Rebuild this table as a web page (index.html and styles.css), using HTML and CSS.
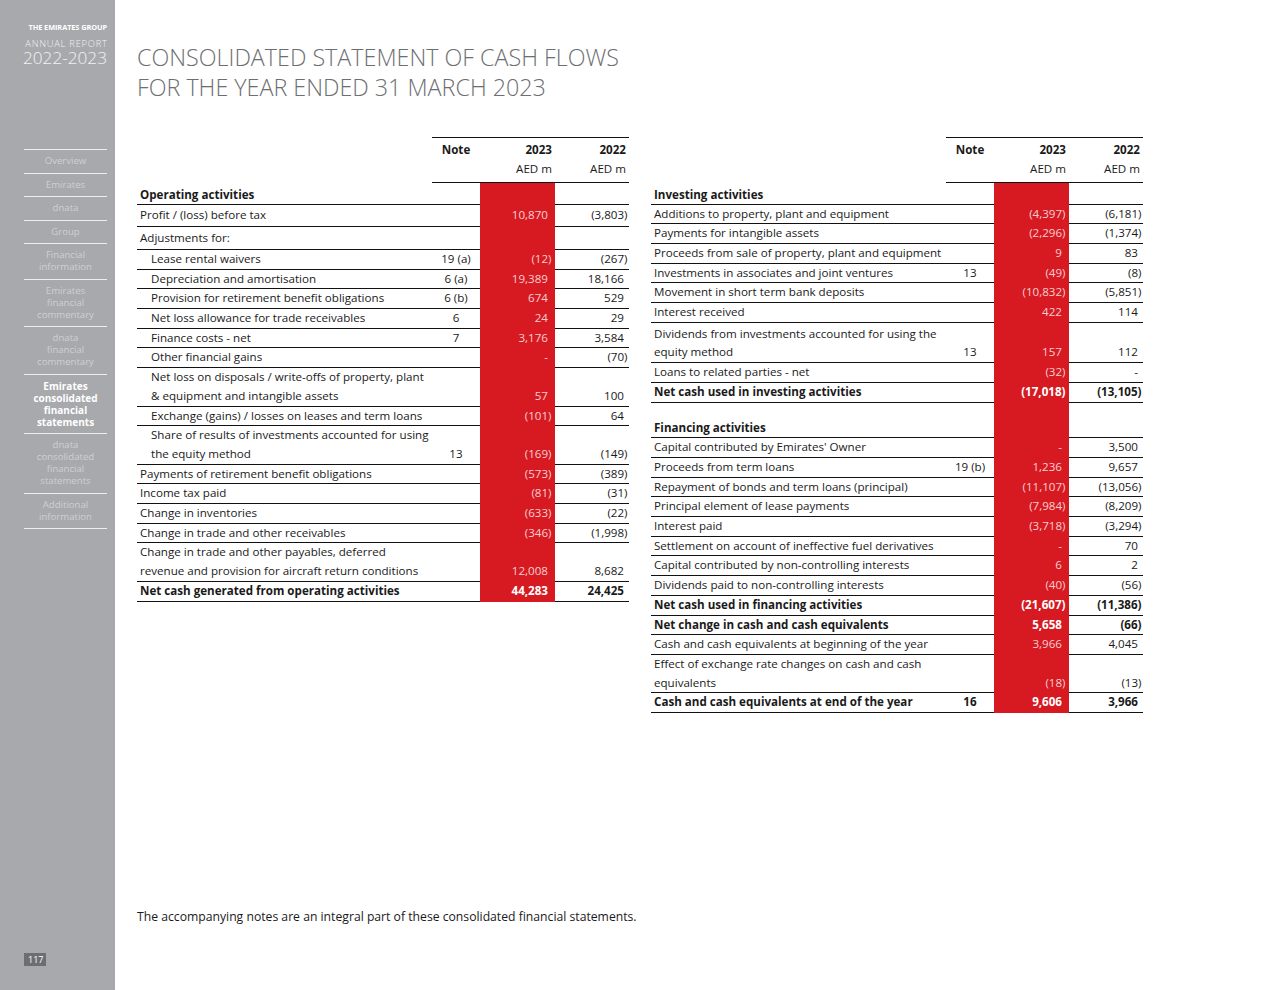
FILE: index.html
```html
<!DOCTYPE html>
<html lang="en">
<head>
<meta charset="utf-8">
<title>Consolidated Statement of Cash Flows</title>
<link rel="stylesheet" href="styles.css">
</head>
<body>
<div class="page">
  <aside class="sidebar">
    <div class="brand">
      <div class="brand-group">THE EMIRATES GROUP</div>
      <div class="brand-ar">ANNUAL REPORT</div>
      <div class="brand-yr">2022-2023</div>
    </div>
    <nav class="nav">
      <a class="nav-item">Overview</a>
      <a class="nav-item">Emirates</a>
      <a class="nav-item">dnata</a>
      <a class="nav-item">Group</a>
      <a class="nav-item">Financial<br>information</a>
      <a class="nav-item">Emirates<br>financial<br>commentary</a>
      <a class="nav-item">dnata<br>financial<br>commentary</a>
      <a class="nav-item active">Emirates<br>consolidated<br>financial<br>statements</a>
      <a class="nav-item">dnata<br>consolidated<br>financial<br>statements</a>
      <a class="nav-item">Additional<br>information</a>
    </nav>
    <div class="pgnum">117</div>
  </aside>

  <main class="main">
    <h1 class="title">CONSOLIDATED STATEMENT OF CASH FLOWS<br>FOR THE YEAR ENDED 31 MARCH 2023</h1>

    <div class="tables">
      <table class="cf">
        <colgroup><col class="c-label"><col class="c-note"><col class="c-cur"><col class="c-prev"></colgroup>
        <thead>
          <tr class="h1"><th class="lbl"></th><th class="note">Note</th><th class="num">2023</th><th class="num">2022</th></tr>
          <tr class="h2"><th class="lbl"></th><th class="note"></th><th class="num">AED m</th><th class="num">AED m</th></tr>
        </thead>
        <tbody>
          <tr class="sec first"><td class="lbl b">Operating activities</td><td class="note"></td><td class="cur"></td><td class="prev"></td></tr>
          <tr class="pad1"><td class="lbl">Profit / (loss) before tax</td><td class="note"></td><td class="cur">10,870</td><td class="prev"><span class="n">(3,803)</span></td></tr>
          <tr class="pad1"><td class="lbl">Adjustments for:</td><td class="note"></td><td class="cur"></td><td class="prev"></td></tr>
          <tr><td class="lbl in">Lease rental waivers</td><td class="note">19 (a)</td><td class="cur"><span class="n">(12)</span></td><td class="prev"><span class="n">(267)</span></td></tr>
          <tr><td class="lbl in">Depreciation and amortisation</td><td class="note">6 (a)</td><td class="cur">19,389</td><td class="prev">18,166</td></tr>
          <tr><td class="lbl in">Provision for retirement benefit obligations</td><td class="note">6 (b)</td><td class="cur">674</td><td class="prev">529</td></tr>
          <tr><td class="lbl in">Net loss allowance for trade receivables</td><td class="note">6</td><td class="cur">24</td><td class="prev">29</td></tr>
          <tr><td class="lbl in">Finance costs - net</td><td class="note">7</td><td class="cur">3,176</td><td class="prev">3,584</td></tr>
          <tr><td class="lbl in">Other financial gains</td><td class="note"></td><td class="cur">-</td><td class="prev"><span class="n">(70)</span></td></tr>
          <tr><td class="lbl in">Net loss on disposals / write-offs of property, plant<br>&amp; equipment and intangible assets</td><td class="note"></td><td class="cur">57</td><td class="prev">100</td></tr>
          <tr><td class="lbl in">Exchange (gains) / losses on leases and term loans</td><td class="note"></td><td class="cur"><span class="n">(101)</span></td><td class="prev">64</td></tr>
          <tr><td class="lbl in">Share of results of investments accounted for using<br>the equity method</td><td class="note">13</td><td class="cur"><span class="n">(169)</span></td><td class="prev"><span class="n">(149)</span></td></tr>
          <tr><td class="lbl">Payments of retirement benefit obligations</td><td class="note"></td><td class="cur"><span class="n">(573)</span></td><td class="prev"><span class="n">(389)</span></td></tr>
          <tr><td class="lbl">Income tax paid</td><td class="note"></td><td class="cur"><span class="n">(81)</span></td><td class="prev"><span class="n">(31)</span></td></tr>
          <tr><td class="lbl">Change in inventories</td><td class="note"></td><td class="cur"><span class="n">(633)</span></td><td class="prev"><span class="n">(22)</span></td></tr>
          <tr><td class="lbl">Change in trade and other receivables</td><td class="note"></td><td class="cur"><span class="n">(346)</span></td><td class="prev"><span class="n">(1,998)</span></td></tr>
          <tr><td class="lbl">Change in trade and other payables, deferred<br>revenue and provision for aircraft return conditions</td><td class="note"></td><td class="cur">12,008</td><td class="prev">8,682</td></tr>
          <tr class="total"><td class="lbl">Net cash generated from operating activities</td><td class="note"></td><td class="cur">44,283</td><td class="prev">24,425</td></tr>
        </tbody>
      </table>

      <table class="cf">
        <colgroup><col class="c-label"><col class="c-note"><col class="c-cur"><col class="c-prev"></colgroup>
        <thead>
          <tr class="h1"><th class="lbl"></th><th class="note">Note</th><th class="num">2023</th><th class="num">2022</th></tr>
          <tr class="h2"><th class="lbl"></th><th class="note"></th><th class="num">AED m</th><th class="num">AED m</th></tr>
        </thead>
        <tbody>
          <tr class="sec first"><td class="lbl b">Investing activities</td><td class="note"></td><td class="cur"></td><td class="prev"></td></tr>
          <tr><td class="lbl">Additions to property, plant and equipment</td><td class="note"></td><td class="cur"><span class="n">(4,397)</span></td><td class="prev"><span class="n">(6,181)</span></td></tr>
          <tr><td class="lbl">Payments for intangible assets</td><td class="note"></td><td class="cur"><span class="n">(2,296)</span></td><td class="prev"><span class="n">(1,374)</span></td></tr>
          <tr><td class="lbl">Proceeds from sale of property, plant and equipment</td><td class="note"></td><td class="cur">9</td><td class="prev">83</td></tr>
          <tr><td class="lbl">Investments in associates and joint ventures</td><td class="note">13</td><td class="cur"><span class="n">(49)</span></td><td class="prev"><span class="n">(8)</span></td></tr>
          <tr><td class="lbl">Movement in short term bank deposits</td><td class="note"></td><td class="cur"><span class="n">(10,832)</span></td><td class="prev"><span class="n">(5,851)</span></td></tr>
          <tr><td class="lbl">Interest received</td><td class="note"></td><td class="cur">422</td><td class="prev">114</td></tr>
          <tr class="two"><td class="lbl">Dividends from investments accounted for using the<br>equity method</td><td class="note">13</td><td class="cur">157</td><td class="prev">112</td></tr>
          <tr><td class="lbl">Loans to related parties - net</td><td class="note"></td><td class="cur"><span class="n">(32)</span></td><td class="prev">-</td></tr>
          <tr class="total"><td class="lbl">Net cash used in investing activities</td><td class="note"></td><td class="cur"><span class="n">(17,018)</span></td><td class="prev"><span class="n">(13,105)</span></td></tr>
          <tr class="sec gap"><td class="lbl b">Financing activities</td><td class="note"></td><td class="cur"></td><td class="prev"></td></tr>
          <tr><td class="lbl">Capital contributed by Emirates' Owner</td><td class="note"></td><td class="cur">-</td><td class="prev">3,500</td></tr>
          <tr><td class="lbl">Proceeds from term loans</td><td class="note">19 (b)</td><td class="cur">1,236</td><td class="prev">9,657</td></tr>
          <tr><td class="lbl">Repayment of bonds and term loans (principal)</td><td class="note"></td><td class="cur"><span class="n">(11,107)</span></td><td class="prev"><span class="n">(13,056)</span></td></tr>
          <tr><td class="lbl">Principal element of lease payments</td><td class="note"></td><td class="cur"><span class="n">(7,984)</span></td><td class="prev"><span class="n">(8,209)</span></td></tr>
          <tr><td class="lbl">Interest paid</td><td class="note"></td><td class="cur"><span class="n">(3,718)</span></td><td class="prev"><span class="n">(3,294)</span></td></tr>
          <tr><td class="lbl">Settlement on account of ineffective fuel derivatives</td><td class="note"></td><td class="cur">-</td><td class="prev">70</td></tr>
          <tr><td class="lbl">Capital contributed by non-controlling interests</td><td class="note"></td><td class="cur">6</td><td class="prev">2</td></tr>
          <tr><td class="lbl">Dividends paid to non-controlling interests</td><td class="note"></td><td class="cur"><span class="n">(40)</span></td><td class="prev"><span class="n">(56)</span></td></tr>
          <tr class="total"><td class="lbl">Net cash used in financing activities</td><td class="note"></td><td class="cur"><span class="n">(21,607)</span></td><td class="prev"><span class="n">(11,386)</span></td></tr>
          <tr class="total"><td class="lbl">Net change in cash and cash equivalents</td><td class="note"></td><td class="cur">5,658</td><td class="prev"><span class="n">(66)</span></td></tr>
          <tr><td class="lbl">Cash and cash equivalents at beginning of the year</td><td class="note"></td><td class="cur">3,966</td><td class="prev">4,045</td></tr>
          <tr><td class="lbl">Effect of exchange rate changes on cash and cash<br>equivalents</td><td class="note"></td><td class="cur"><span class="n">(18)</span></td><td class="prev"><span class="n">(13)</span></td></tr>
          <tr class="total"><td class="lbl">Cash and cash equivalents at end of the year</td><td class="note">16</td><td class="cur">9,606</td><td class="prev">3,966</td></tr>
        </tbody>
      </table>
    </div>

    <p class="footnote">The accompanying notes are an integral part of these consolidated financial statements.</p>
  </main>
</div>
</body>
</html>
```

FILE: styles.css
```css
* { box-sizing: border-box; }

html, body {
  margin: 0;
  padding: 0;
  background: #ffffff;
}

body {
  font-family: "Open Sans", "Noto Sans", "Liberation Sans", sans-serif;
  color: #1a1a1a;
}

.page {
  display: flex;
  width: 1280px;
  height: 990px;
}

/* ---------- Sidebar ---------- */
.sidebar {
  width: 115px;
  flex: 0 0 115px;
  background: #a7a9ac;
  display: flex;
  flex-direction: column;
  padding: 22px 8px 24px 24px;
}

.brand {
  display: flex;
  flex-direction: column;
  align-items: flex-end;
  color: #ffffff;
}

.brand-group {
  font-size: 7.4px;
  font-weight: 700;
  line-height: 10px;
  letter-spacing: -0.1px;
  white-space: nowrap;
}

.brand-ar {
  font-size: 9.4px;
  font-weight: 300;
  line-height: 9px;
  margin-top: 7px;
  letter-spacing: 0.75px;
  margin-right: -0.75px;
  color: #f2f2f2;
  white-space: nowrap;
}

.brand-yr {
  font-size: 17.2px;
  font-weight: 300;
  line-height: 15px;
  margin-top: 2px;
  color: #f2f2f2;
  white-space: nowrap;
}

.nav {
  margin-top: 84px;
  border-top: 1px solid #ececec;
  display: flex;
  flex-direction: column;
}

.nav-item {
  display: block;
  text-align: center;
  font-size: 9.6px;
  line-height: 12px;
  padding: 5px 0 5.5px;
  border-bottom: 1px solid #ececec;
  color: #cfd0d2;
  text-decoration: none;
}

.nav-item.active {
  color: #ffffff;
  font-weight: 700;
  font-size: 10px;
}

.pgnum {
  margin-top: auto;
  align-self: flex-start;
  background: #6d6e71;
  color: #ffffff;
  font-size: 9px;
  line-height: 13px;
  padding: 0 4px;
  width: 22px;
  text-align: center;
}

/* ---------- Main ---------- */
.main {
  flex: 1;
  display: flex;
  flex-direction: column;
  padding: 0 0 64px 22px;
}

.title {
  margin: 42px 0 0 0;
  font-size: 23.3px;
  line-height: 30px;
  font-weight: 300;
  color: #6d6e71;
}

.tables {
  display: flex;
  align-items: flex-start;
  gap: 22px;
  margin-top: 35px;
}

.cf {
  border-collapse: collapse;
  table-layout: fixed;
  width: 492px;
  font-size: 11.6px;
}

.c-label { width: 295px; }
.c-note { width: 48px; }
.c-cur { width: 75px; }
.c-prev { width: 74px; }

.cf th, .cf td {
  padding: 0;
  white-space: nowrap;
}

.cf th {
  font-weight: 400;
  line-height: 19px;
}

.cf thead .h1 th.note,
.cf thead .h1 th.num {
  border-top: 1px solid #111;
  font-weight: 700;
  padding-top: 2px;
}

.cf thead .h2 th.note,
.cf thead .h2 th.num {
  border-bottom: 1px solid #111;
  padding-bottom: 4px;
}

.cf th.note { text-align: center; }
.cf th.num { text-align: right; padding-right: 3px; }

.cf td {
  line-height: 18.7px;
  border-bottom: 1px solid #111;
  vertical-align: bottom;
}

.cf td.lbl { padding-left: 3px; }
.cf td.lbl.in { padding-left: 14px; }
.cf td.note { text-align: center; }

.cf td.cur {
  background: #d71a21;
  border-bottom-color: #d71a21;
  color: #f8cfd1;
  text-align: right;
  padding-right: 7px;
}

.cf td.prev {
  text-align: right;
  padding-right: 5px;
}

.cf .n { margin-right: -3.5px; }

.cf .b { font-weight: 700; }

.cf tr.sec td { font-weight: 700; }
.cf tr.sec.first td { padding-top: 2px; line-height: 19px; }
.cf tr.sec.gap td { padding-top: 16px; }

.cf tr.pad1 td { padding-top: 1.5px; padding-bottom: 1.5px; }
.cf tr.two td { padding-top: 2px; }

.cf tr.total td { font-weight: 700; }
.cf tr.total td.cur { color: #ffffff; }

.footnote {
  margin: auto 0 0 0;
  font-size: 12.2px;
  line-height: 19px;
  color: #1a1a1a;
}
```
